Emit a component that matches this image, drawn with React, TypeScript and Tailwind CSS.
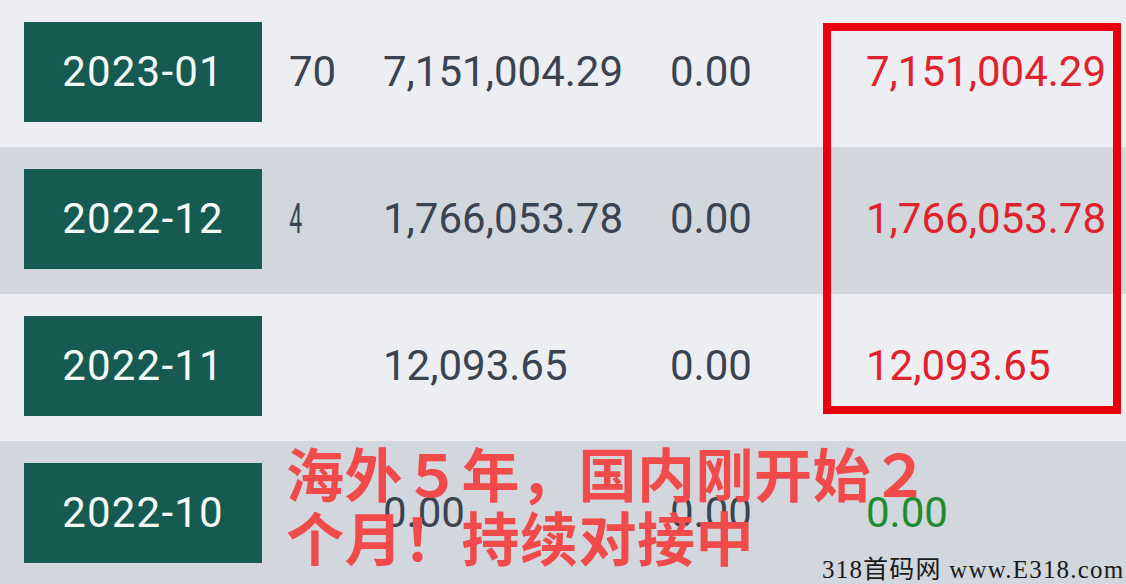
const rows = [
  { month: '2023-01', a: '70', b: '7,151,004.29', c: '0.00', d: '7,151,004.29', tone: 'red', shade: false },
  { month: '2022-12', a: '4', b: '1,766,053.78', c: '0.00', d: '1,766,053.78', tone: 'red', shade: true },
  { month: '2022-11', a: '', b: '12,093.65', c: '0.00', d: '12,093.65', tone: 'red', shade: false },
  { month: '2022-10', a: '', b: '0.00', c: '0.00', d: '0.00', tone: 'green', shade: true },
];

export default function App() {
  return (
    <div
      className="relative w-[1126px] h-[584px] overflow-hidden bg-[#eceef2]"
      style={{ fontFamily: 'Roboto, "Noto Sans", sans-serif' }}
    >
      {rows.map((r) => (
        <div
          key={r.month}
          className={
            'flex items-center h-[147px] pb-[4px] ' +
            (r.shade ? 'bg-[#d2d7dd]' : 'bg-[#eceef2]')
          }
        >
          <div className="ml-[24px] w-[238px] h-[100px] shrink-0 flex items-center justify-center bg-[#165a51] text-[#f2faf6] text-[42px] tracking-[1.2px]">
            {r.month}
          </div>
          <div className="ml-[27px] w-[94px] shrink-0 overflow-hidden text-[42px] text-[#3b4250]">
            {r.a === '4' ? (
              <span className="inline-block -ml-[5px] scale-x-[0.55] text-[#3b4250]">4</span>
            ) : (
              r.a
            )}
          </div>
          <div className="w-[287px] shrink-0 text-[42px] text-[#3b4250]">{r.b}</div>
          <div className="w-[196px] shrink-0 text-[42px] text-[#3b4250]">{r.c}</div>
          <div
            className={
              'text-[42px] ' +
              (r.tone === 'red' ? 'text-[#e0222c]' : 'text-[#1c8c2e]')
            }
          >
            {r.d}
          </div>
        </div>
      ))}

      {/* highlight frame */}
      <div className="absolute left-[823px] top-[23px] w-[298px] h-[391px] border-[8px] border-[#ea000c]" />

      {/* caption overlay */}
      <div
        className="absolute left-[286px] top-[440px] text-[58px] leading-[64px] font-bold text-[#f04a4a] tracking-[0.5px]"
        style={{ fontFamily: '"Noto Sans CJK SC", sans-serif' }}
      >
        <div>海外５年，国内刚开始２</div>
        <div>个月！持续对接中</div>
      </div>

      {/* watermark */}
      <div
        className="absolute left-[822px] top-[555px] text-[25px] leading-[30px] text-[#1a1a1a] whitespace-nowrap tracking-[1.2px]"
        style={{ fontFamily: '"Liberation Serif", "Noto Sans CJK SC", serif' }}
      >
        318首码网 www.E318.com
      </div>
    </div>
  );
}
